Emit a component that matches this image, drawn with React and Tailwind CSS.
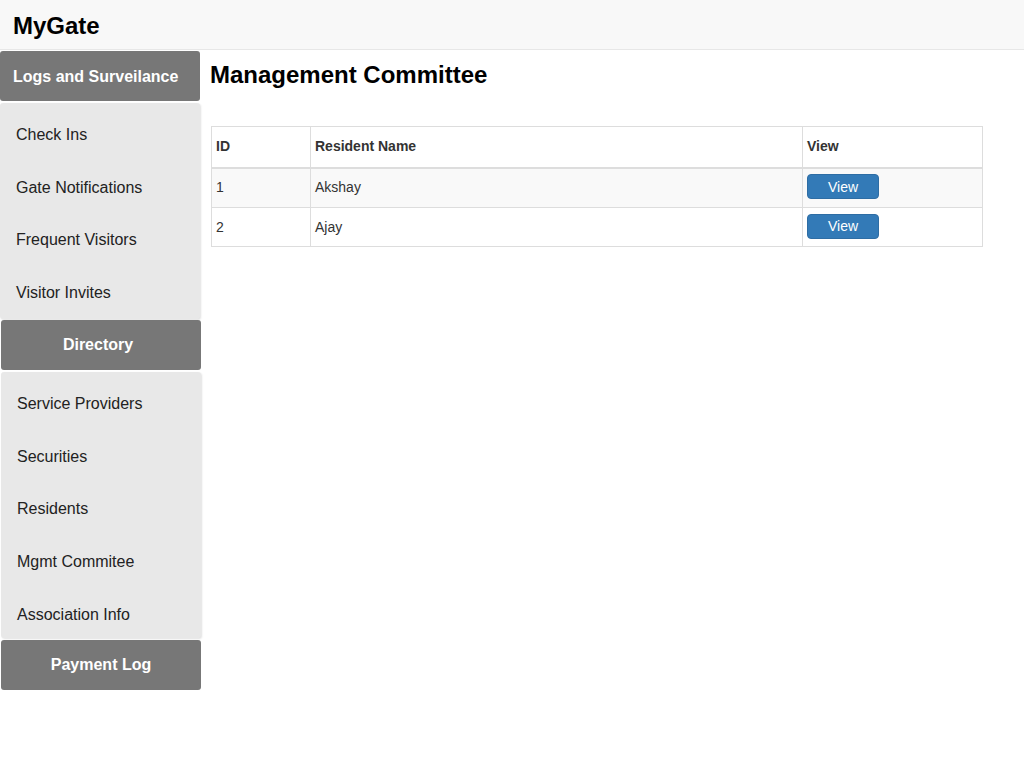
export default function App() {
  const font = { fontFamily: '"Liberation Sans", Arial, sans-serif' };
  const list1 = ["Check Ins", "Gate Notifications", "Frequent Visitors", "Visitor Invites"];
  const list2 = ["Service Providers", "Securities", "Residents", "Mgmt Commitee", "Association Info"];
  const rows = [
    { id: 1, name: "Akshay" },
    { id: 2, name: "Ajay" },
  ];
  return (
    <div className="w-[1024px] h-[768px] bg-white text-black" style={font}>
      <header className="h-[50px] bg-[#f8f8f8] border-b border-[#e7e7e7] flex items-center pl-[13px] pt-[3px]">
        <span className="text-[24px] font-bold leading-none text-black">MyGate</span>
      </header>
      <div className="flex">
        <aside className="w-[202px] shrink-0 flex flex-col pt-px">
          <div className="w-[200px] h-[50px] bg-[#777777] rounded-[3px] flex items-center pl-[13px] pt-[2px] text-white font-bold text-[16px]">
            Logs and Surveilance
          </div>
          <div className="w-[200px] mt-[2px] h-[216px] bg-[#e8e8e8] rounded-[3px] shadow-[1px_1px_2px_rgba(0,0,0,0.12)] pt-[6px]">
            {list1.map((t) => (
              <div key={t} className="h-[52.5px] flex items-center pl-[16px] text-[16px] text-[#222]">
                {t}
              </div>
            ))}
          </div>
          <div className="ml-px w-[200px] mt-px h-[50px] bg-[#777777] rounded-[3px] flex items-center justify-center pr-[6px] text-white font-bold text-[16px]">
            Directory
          </div>
          <div className="ml-px w-[200px] mt-[2px] h-[266px] overflow-hidden bg-[#e8e8e8] rounded-[3px] shadow-[1px_1px_2px_rgba(0,0,0,0.12)] pt-[6px]">
            {list2.map((t) => (
              <div key={t} className="h-[52.6px] flex items-center pl-[16px] text-[16px] text-[#222]">
                {t}
              </div>
            ))}
          </div>
          <div className="ml-px w-[200px] mt-[2px] h-[50px] bg-[#777777] rounded-[3px] flex items-center justify-center text-white font-bold text-[16px]">
            Payment Log
          </div>
        </aside>
        <main className="flex-1 pl-[8px]">
          <h2 className="mt-[11px] h-[28px] leading-[28px] text-[24px] font-bold text-black">Management Committee</h2>
          <table className="ml-px mt-[37px] w-[772px] border-collapse border border-[#dddddd] text-[14px] text-[#333]">
            <thead>
              <tr className="h-[41px]">
                <th className="w-[99px] border border-[#dddddd] border-b-2 text-left font-bold px-[4px]">ID</th>
                <th className="w-[492px] border border-[#dddddd] border-b-2 text-left font-bold px-[4px]">Resident Name</th>
                <th className="border border-[#dddddd] border-b-2 text-left font-bold px-[4px]">View</th>
              </tr>
            </thead>
            <tbody>
              {rows.map((r, i) => (
                <tr key={r.id} className={i === 0 ? "h-[40px] bg-[#f9f9f9]" : "h-[39px] bg-white"}>
                  <td className="border border-[#dddddd] px-[4px]">{r.id}</td>
                  <td className="border border-[#dddddd] px-[4px]">{r.name}</td>
                  <td className="border border-[#dddddd] px-[4px] pb-[2px]">
                    <button className="w-[72px] h-[25px] bg-[#337ab7] border border-[#2e6da4] rounded-[4px] text-white text-[14px] leading-none align-middle">
                      View
                    </button>
                  </td>
                </tr>
              ))}
            </tbody>
          </table>
        </main>
      </div>
    </div>
  );
}
